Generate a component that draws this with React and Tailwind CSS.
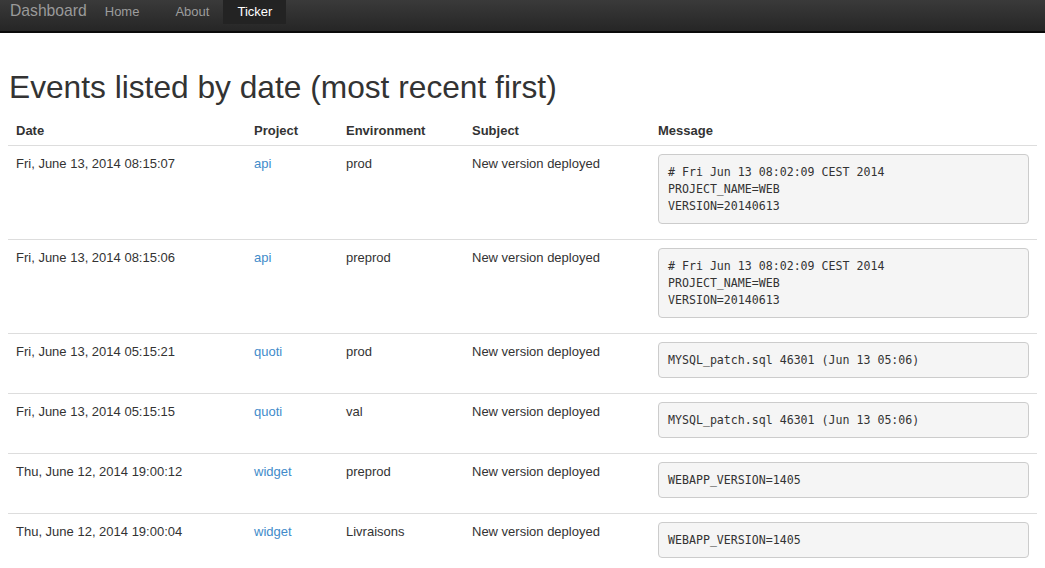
import React from "react";

const rows = [
  { date: "Fri, June 13, 2014 08:15:07", project: "api", env: "prod", msg: ["# Fri Jun 13 08:02:09 CEST 2014", "PROJECT_NAME=WEB", "VERSION=20140613"] },
  { date: "Fri, June 13, 2014 08:15:06", project: "api", env: "preprod", msg: ["# Fri Jun 13 08:02:09 CEST 2014", "PROJECT_NAME=WEB", "VERSION=20140613"] },
  { date: "Fri, June 13, 2014 05:15:21", project: "quoti", env: "prod", msg: ["MYSQL_patch.sql 46301 (Jun 13 05:06)"] },
  { date: "Fri, June 13, 2014 05:15:15", project: "quoti", env: "val", msg: ["MYSQL_patch.sql 46301 (Jun 13 05:06)"] },
  { date: "Thu, June 12, 2014 19:00:12", project: "widget", env: "preprod", msg: ["WEBAPP_VERSION=1405"] },
  { date: "Thu, June 12, 2014 19:00:04", project: "widget", env: "Livraisons", msg: ["WEBAPP_VERSION=1405"] },
];

export default function App() {
  return (
    <div className="min-h-[568px] bg-white text-[#333] text-[13px] leading-[18px]" style={{ fontFamily: '"Liberation Sans", Arial, sans-serif' }}>
      <div className="h-[33px] border-b-2 border-[#0a0a0a] bg-gradient-to-b from-[#3a3a3a] to-[#262626] flex items-start">
        <span className="ml-[10px] mt-[1px] text-[15.7px] leading-[20px] text-[#9a9a9a]">Dashboard</span>
        <nav className="flex ml-[4px]">
          <a className="h-[24px] px-[14px] leading-[23px] text-[#9d9d9d]">Home</a>
          <a className="h-[24px] px-[14px] ml-[8px] leading-[23px] text-[#9d9d9d]">About</a>
          <a className="h-[24px] px-[14px] leading-[23px] text-white bg-[#232323]">Ticker</a>
        </nav>
      </div>
      <div className="px-2">
        <h1 className="mt-[37px] text-[31.7px] leading-[35px] pl-[1px] text-[#333]">Events listed by date (most recent first)</h1>
        <table className="w-full mt-[8px] border-collapse table-fixed">
          <colgroup>
            <col className="w-[238px]" />
            <col className="w-[92px]" />
            <col className="w-[126px]" />
            <col className="w-[186px]" />
            <col />
          </colgroup>
          <thead>
            <tr className="border-b border-[#ddd]">
              <th className="text-left font-bold px-2 pt-[9px] pb-[5px] align-bottom">Date</th>
              <th className="text-left font-bold px-2 pt-[9px] pb-[5px] align-bottom">Project</th>
              <th className="text-left font-bold px-2 pt-[9px] pb-[5px] align-bottom">Environment</th>
              <th className="text-left font-bold px-2 pt-[9px] pb-[5px] align-bottom">Subject</th>
              <th className="text-left font-bold px-2 pt-[9px] pb-[5px] align-bottom">Message</th>
            </tr>
          </thead>
          <tbody>
            {rows.map((r, i) => (
              <tr key={i} className="border-t border-[#ddd] align-top">
                <td className="px-2 pt-[9px]">{r.date}</td>
                <td className="px-2 pt-[9px]"><a className="text-[#428bca]">{r.project}</a></td>
                <td className="px-2 pt-[9px]">{r.env}</td>
                <td className="px-2 pt-[9px]">New version deployed</td>
                <td className="px-2 pt-2 pb-2">
                  <pre className="mb-[7px] border border-[#ccc] rounded-[4px] bg-[#f5f5f5] px-[9px] py-[8.5px] text-[11.6px] leading-[17px] text-[#333]" style={{ fontFamily: '"DejaVu Sans Mono", "Liberation Mono", monospace' }}>
                    {r.msg.join("\n")}
                  </pre>
                </td>
              </tr>
            ))}
          </tbody>
        </table>
      </div>
    </div>
  );
}
